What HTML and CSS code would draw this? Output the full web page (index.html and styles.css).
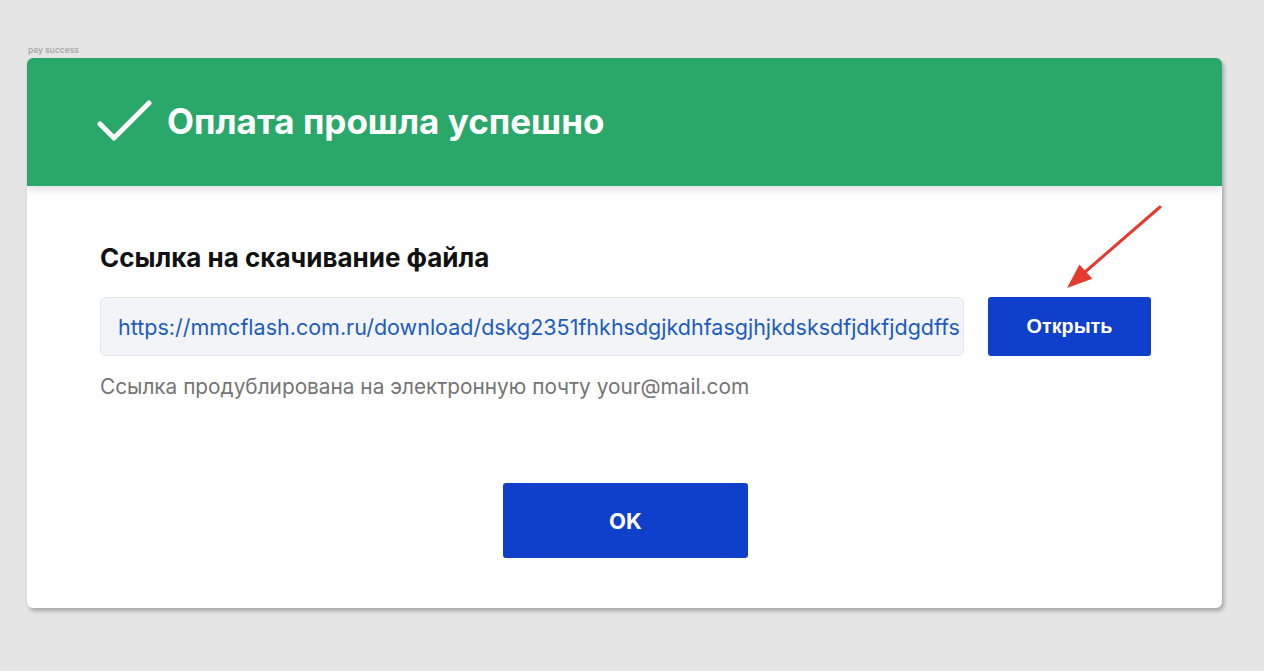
FILE: index.html
```html
<!DOCTYPE html>
<html lang="ru">
<head>
<meta charset="utf-8">
<link rel="stylesheet" href="styles.css">
</head>
<body>
<div class="frame">
  <div class="frame-label">pay success</div>
  <div class="card">
    <div class="header">
      <svg class="check" width="56" height="44" viewBox="0 0 56 44"><path d="M3 25 L17 39 L52 4" fill="none" stroke="#fff" stroke-width="5" stroke-linecap="round" stroke-linejoin="round"/></svg>
      <h1 class="title">Оплата прошла успешно</h1>
    </div>
    <div class="body">
      <h2 class="subtitle">Ссылка на скачивание файла</h2>
      <div class="row">
        <div class="link-box">https://mmcflash.com.ru/download/dskg2351fhkhsdgjkdhfasgjhjkdsksdfjdkfjdgdffs</div>
        <button class="btn btn-open">Открыть</button>
      </div>
      <p class="note">Ссылка продублирована на электронную почту your@mail.com</p>
      <div class="actions">
        <button class="btn btn-ok">OK</button>
      </div>
      <svg class="arrow" width="120" height="100" viewBox="0 0 120 100"><line x1="108" y1="11" x2="33" y2="76" stroke="#e53a2f" stroke-width="3" stroke-linecap="round"/><polygon points="15,92 27.5,68.5 40.3,82.8" fill="#e53a2f"/></svg>
    </div>
  </div>
</div>
</body>
</html>
```
FILE: styles.css
```css
* { box-sizing: border-box; }
html, body { margin: 0; padding: 0; }
body {
  background: #e5e5e5;
  font-family: Inter, "Noto Sans", sans-serif;
  width: 1264px;
  height: 671px;
  overflow: hidden;
}
.frame {
  padding: 45px 42px 0 27px;
}
.frame-label {
  font-size: 8.5px;
  font-weight: 500;
  color: #a3a3a3;
  line-height: 10px;
  margin-left: 1px;
  margin-bottom: 3px;
}
.card {
  position: relative;
  background: #fff;
  border-radius: 6px;
  width: 1195px;
  height: 550px;
  box-shadow: 2px 3px 4px rgba(0,0,0,0.28);
  overflow: hidden;
}
.header {
  height: 128px;
  background: #29a86a;
  display: flex;
  align-items: center;
  padding-left: 70px;
  gap: 14px;
  box-shadow: 0 4px 8px rgba(0,0,0,0.12);
  position: relative;
  z-index: 1;
}
.check { margin-top: -2px; }
.title {
  margin: 0;
  color: #fff;
  font-size: 35px;
  font-weight: 700;
  letter-spacing: 0;
  margin-top: -2px;
}
.body {
  position: relative;
  padding: 56px 71px 0 73px;
}
.subtitle {
  margin: 0;
  font-size: 26px;
  font-weight: 700;
  color: #111;
  line-height: 32px;
}
.row {
  display: flex;
  gap: 24px;
  margin-top: 23px;
}
.link-box {
  width: 864px;
  height: 59px;
  background: #f3f4f7;
  border: 1px solid #e3e5ea;
  border-radius: 6px;
  display: flex;
  align-items: center;
  padding-left: 17px;
  font-size: 21.5px;
  color: #1b5cc0;
  white-space: nowrap;
  overflow: hidden;
}
.btn {
  border: none;
  background: #103fcb;
  color: #fff;
  font-family: "Liberation Sans", Arial, sans-serif;
  font-weight: 700;
  border-radius: 3px;
  cursor: pointer;
}
.btn-open {
  width: 163px;
  height: 59px;
  font-size: 19.8px;
}
.note {
  margin: 17px 0 0;
  font-size: 20.8px;
  color: #757575;
  line-height: 28px;
}
.actions {
  display: flex;
  justify-content: center;
  margin-top: 82px;
}
.btn-ok {
  width: 245px;
  height: 75px;
  font-family: Inter, sans-serif;
  font-size: 22px;
}
.arrow {
  position: absolute;
  left: 1025px;
  top: 10px;
}
```
